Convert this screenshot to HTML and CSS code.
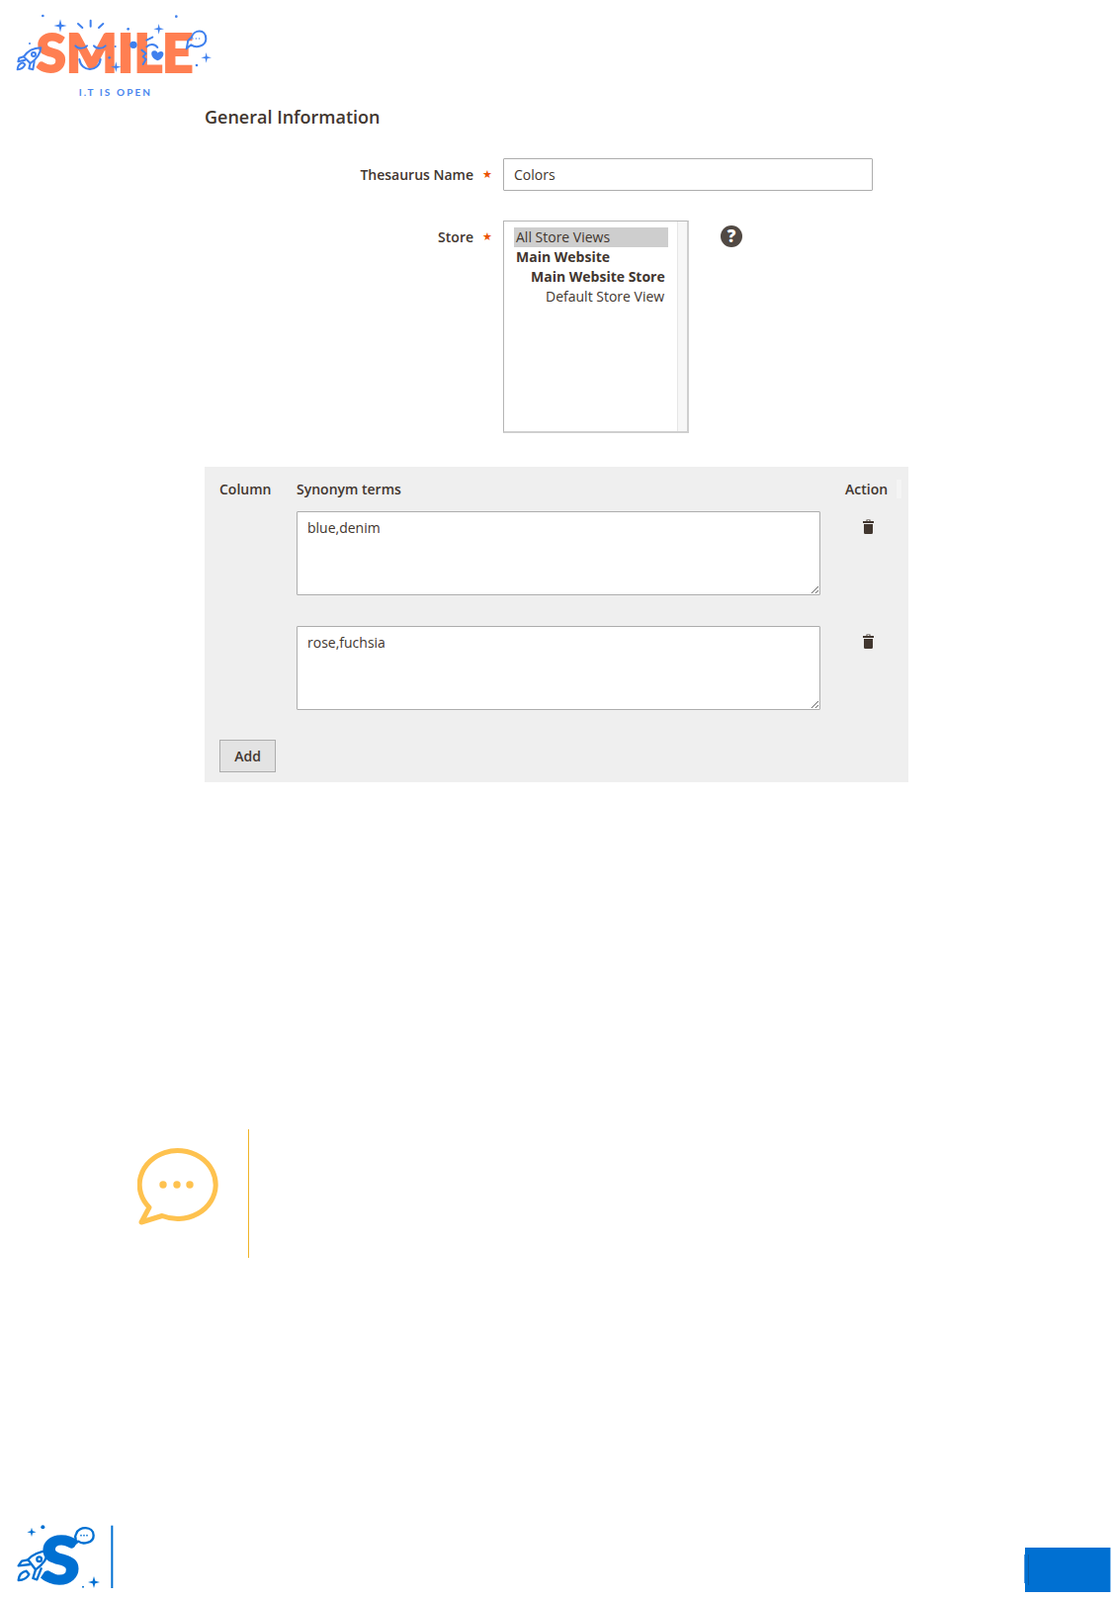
FILE: index.html
```html
<!DOCTYPE html>
<html lang="en">
	<head>
		<meta charset="UTF-8" />
		<title>Thesaurus - General Information</title>
		<link rel="stylesheet" href="styles.css">
	</head>
	<body>
		<header class="top">
			<svg class="logo" viewBox="0 0 720 330" width="240" height="110">
				<text class="logo-word" x="110" y="220" textLength="476" lengthAdjust="spacingAndGlyphs">SMILE</text>
				<text class="logo-tag" x="239" y="290" textLength="217">I.T IS OPEN</text>
				<g class="logo-line">
					<path d="M237 72l13 12M275 62v18M313 72l-13 12" />
					<path d="M229 139c8 10 26 10 35 0M285 139c8 10 26 10 35 0" />
					<path d="M241 180c6 40 58 40 64 0" />
					<path d="M445 122l18-9M445 142c8-10 26-10 33 2" />
					<path d="M430 152l13 10-9 10 9 8-9 15" />
					<path d="M124 145C100 146 84 154 72 172L92 192C110 180 122 164 124 145Z" />
					<circle cx="102" cy="165" r="6" />
					<path d="M72 172L58 176 55 187 76 182M92 192L88 208 100 211 104 186" />
					<path d="M70 190C59 192 54 200 53 211 63 210 72 205 76 196Z" />
					<path d="M582 112C588 90 625 86 625 118 625 142 594 146 580 136L566 148 570 128C568 122 578 118 582 112Z" />
				</g>
				<g class="logo-fill">
					<path d="M183 58l4 16 16 4-16 4-4 16-4-16-16-4 16-4zM482 72l3 13 13 3-13 3-3 13-3-13-13-3 13-3zM626 159l3 13 13 3-13 3-3 13-3-13-13-3 13-3zM352 187l3 13 13 3-13 3-3 13-3-13-13-3 13-3z" />
					<path d="M478 184c-24-10-22-32-8-30 5 1 8 4 9 7 2-3 6-6 11-5 12 3 6 22-12 28z" />
					<circle cx="405" cy="136" r="11" />
					<circle cx="130" cy="48" r="4" />
					<circle cx="535" cy="50" r="4" />
					<circle cx="90" cy="132" r="3" />
					<circle cx="389" cy="88" r="4" />
					<circle cx="350" cy="141" r="3" />
					<circle cx="332" cy="175" r="4" />
					<circle cx="597" cy="198" r="4" />
					<circle cx="585" cy="117" r="2" />
					<circle cx="595" cy="117" r="2" />
					<circle cx="605" cy="117" r="2" />
				</g>
			</svg>
		</header>

		<main>
			<section class="form">
				<h2>General Information</h2>
				<div class="field">
					<label class="field-label">Thesaurus Name<span class="req">★</span></label>
					<input class="text-input" value="Colors" />
				</div>
				<div class="field field-store">
					<label class="field-label">Store<span class="req">★</span></label>
					<div class="store-list">
						<ul>
							<li class="selected">All Store Views</li>
							<li class="bold">Main Website</li>
							<li class="bold level-1">Main Website Store</li>
							<li class="level-2">Default Store View</li>
						</ul>
						<div class="scroll-track"></div>
					</div>
					<span class="help">?</span>
				</div>

				<div class="terms">
					<div class="head">Column</div>
					<div class="head">Synonym terms</div>
					<div class="head head-action">Action<span class="head-end"></span></div>

					<div></div>
					<textarea>blue,denim</textarea>
					<div class="action">
						<svg viewBox="0 0 11 16" width="11" height="16"><path d="M3.5 1.5h4V3H11v2H0V3h3.500zM4.500 2v1h2V2zM1 6h9v8.500c0 .8-.5 1.500-1.300 1.500H2.300C1.500 16 1 15.300 1 14.500z" /></svg>
					</div>

					<div></div>
					<textarea>rose,fuchsia</textarea>
					<div class="action">
						<svg viewBox="0 0 11 16" width="11" height="16"><path d="M3.5 1.5h4V3H11v2H0V3h3.500zM4.500 2v1h2V2zM1 6h9v8.500c0 .8-.5 1.500-1.300 1.500H2.300C1.500 16 1 15.300 1 14.500z" /></svg>
					</div>

					<button class="add-btn">Add</button>
				</div>
			</section>

			<section class="note">
				<svg class="note-icon" viewBox="0 0 84 80" width="84" height="80">
					<path d="M12 61A38.500 34.500 0 1 1 25 69.500L4 76Z" />
					<circle cx="26" cy="38" r="3.700" />
					<circle cx="40" cy="38" r="3.700" />
					<circle cx="53" cy="38" r="3.700" />
				</svg>
				<div class="note-rule"></div>
			</section>
		</main>

		<footer>
			<svg class="foot-logo" viewBox="0 0 390 264" width="130" height="88">
				<text class="foot-s" x="124" y="214" textLength="118" lengthAdjust="spacingAndGlyphs">S</text>
				<g class="foot-line">
					<path d="M146 115C122 116 100 124 85 142L108 172C128 158 144 138 146 115Z" />
					<circle cx="119" cy="140" r="7" />
					<path d="M85 142L66 146 56 160 92 156M108 172L100 198 112 202 126 166" />
					<path d="M80 176C68 178 58 186 56 204 70 204 82 198 88 186Z" />
					<path d="M232 62C238 40 284 38 284 68 284 92 250 96 238 86L224 96 230 78C226 70 228 68 232 62Z" />
				</g>
				<g class="foot-fill">
					<path d="M96 44l3 11 11 3-11 3-3 11-3-11-11-3 11-3zM285 192l4 14 14 4-14 4-4 14-4-14-14-4 14-4z" />
					<circle cx="130" cy="43" r="6" />
					<circle cx="252" cy="224" r="3" />
					<circle cx="246" cy="68" r="2.500" />
					<circle cx="255" cy="68" r="2.500" />
					<circle cx="264" cy="68" r="2.500" />
					<rect x="337" y="38" width="6" height="190" />
				</g>
			</svg>
			<div class="page-box"></div>
		</footer>
	</body>
</html>
```

FILE: styles.css
```css
html,
body {
	margin: 0;
	background: #fff;
}
body {
	width: 1124px;
	height: 1618px;
	font-family: "Open Sans", "Noto Sans", sans-serif;
	font-size: 14px;
	color: #41362f;
	overflow: hidden;
}
.top {
	height: 105px;
}
.logo {
	display: block;
}
.logo-word {
	font-family: Lato, sans-serif;
	font-weight: 900;
	font-size: 158px;
	fill: #ff7f52;
	stroke: #ff7f52;
	stroke-width: 6;
}
.logo-tag {
	font-family: Lato, sans-serif;
	font-weight: 700;
	font-size: 30px;
	fill: #4a86ee;
}
.logo-line {
	fill: none;
	stroke: #3f80ee;
	stroke-width: 6;
	stroke-linecap: round;
	stroke-linejoin: round;
}
.logo-fill {
	fill: #3f80ee;
}
.form {
	margin-left: 207px;
	width: 712px;
}
h2 {
	margin: 0 0 29px;
	font-size: 18px;
	line-height: 26px;
	font-weight: 600;
}
.field {
	display: flex;
	align-items: flex-start;
	margin-bottom: 30px;
}
.field-store {
	margin-bottom: 34px;
}
.field-label {
	flex: none;
	width: 302px;
	height: 33px;
	padding-right: 11px;
	box-sizing: border-box;
	display: flex;
	justify-content: flex-end;
	align-items: center;
	font-weight: 600;
}
.req {
	width: 10px;
	margin-left: 9px;
	font-family: "DejaVu Sans", sans-serif;
	font-size: 11px;
	font-weight: 400;
	color: #eb5202;
}
.text-input {
	width: 374px;
	height: 33px;
	padding: 0 10px;
	box-sizing: border-box;
	border: 1px solid #adadad;
	border-radius: 1px;
	font: inherit;
	color: #41362f;
	outline: none;
}
.store-list {
	display: flex;
	width: 188px;
	height: 215px;
	box-sizing: border-box;
	border: 1px solid #adadad;
	border-right-width: 2px;
	border-bottom-width: 2px;
	border-color: #b5b5b5 #cfcfcf #cfcfcf #b5b5b5;
}
.store-list ul {
	flex: 1;
	margin: 0;
	padding: 6px 9px 0 10px;
	list-style: none;
}
.store-list li {
	height: 20px;
	line-height: 20px;
	padding-left: 2px;
	white-space: nowrap;
}
.store-list .selected {
	background: #cecece;
}
.store-list .bold {
	font-weight: 700;
}
.store-list .level-1 {
	padding-left: 17px;
}
.store-list .level-2 {
	padding-left: 32px;
}
.scroll-track {
	flex: none;
	width: 9px;
	background: #f7f7f7;
	border-left: 1px solid #e6e6e6;
}
.help {
	flex: none;
	width: 22px;
	height: 22px;
	margin: 5px 0 0 32px;
	border-radius: 50%;
	background: #514943;
	color: #fff;
	font-size: 17px;
	font-weight: 800;
	line-height: 22px;
	text-align: center;
}
.terms {
	display: grid;
	grid-template-columns: 78px 530px 1fr;
	grid-auto-rows: min-content;
	row-gap: 31px;
	padding: 12px 0 10px 15px;
	background: #efefef;
}
.head {
	height: 22px;
	line-height: 22px;
	margin-bottom: -20px;
	font-weight: 600;
}
.head-action {
	display: flex;
	padding-left: 25px;
}
.head-end {
	width: 5px;
	height: 19px;
	margin: 1px 0 0 9px;
	background: #f4f4f4;
}
textarea {
	display: block;
	width: 530px;
	height: 85px;
	padding: 6px 10px;
	box-sizing: border-box;
	border: 1px solid #adadad;
	border-radius: 1px;
	font: inherit;
	color: #41362f;
	outline: none;
}
.action {
	padding: 7px 0 0 43px;
}
.action svg {
	display: block;
	fill: #41362f;
}
.add-btn {
	grid-column: 1;
	width: 57px;
	height: 33px;
	margin-top: -1px;
	padding: 0;
	border: 1px solid #adadad;
	background: #e3e3e3;
	font: inherit;
	font-weight: 600;
	color: #41362f;
}
.note {
	display: flex;
	align-items: flex-start;
	height: 130px;
	margin: 351px 0 0 139px;
}
.note-icon {
	flex: none;
	margin-top: 18px;
}
.note-icon path {
	fill: none;
	stroke: #fec24f;
	stroke-width: 5;
	stroke-linejoin: round;
}
.note-icon circle {
	fill: #fec24f;
}
.note-rule {
	width: 1px;
	height: 130px;
	margin-left: 28px;
	background: #f0b429;
}
footer {
	display: flex;
	justify-content: space-between;
	align-items: flex-start;
	height: 88px;
	margin-top: 258px;
}
.foot-logo {
	display: block;
}
.foot-s {
	font-family: Lato, sans-serif;
	font-weight: 900;
	font-size: 196px;
	fill: #0070d2;
	stroke: #0070d2;
	stroke-width: 7;
}
.foot-line {
	fill: none;
	stroke: #0070d2;
	stroke-width: 7;
	stroke-linejoin: round;
}
.foot-fill {
	fill: #0070d2;
}
.page-box {
	position: relative;
	width: 86px;
	height: 45px;
	margin: 35px 0 0;
	background: #0070d2;
	border-right: 1px solid #8fc1ee;
}
.page-box::before {
	content: "";
	position: absolute;
	left: -1px;
	top: 7px;
	width: 1px;
	height: 29px;
	background: #5a9bdc;
}
.page-box::after {
	content: "";
	position: absolute;
	left: 3px;
	top: 7px;
	width: 1px;
	height: 31px;
	background: #0a5ea8;
}
```
